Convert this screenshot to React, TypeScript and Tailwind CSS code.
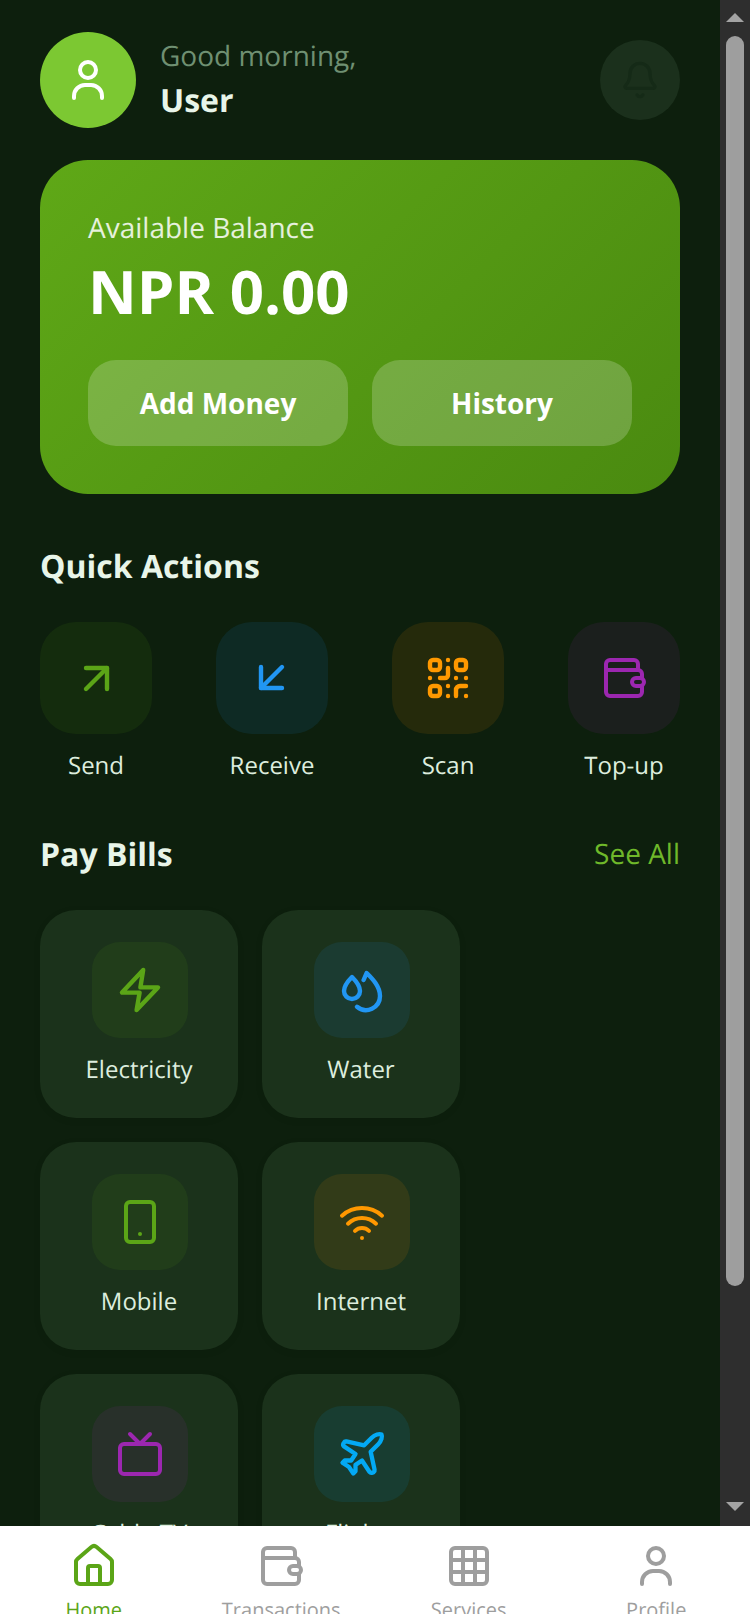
import type { ReactNode } from "react";

type IconProps = { className?: string; strokeWidth?: number };

function Icon({ className, strokeWidth = 2, children }: IconProps & { children: ReactNode }) {
  return (
    <svg viewBox="0 0 24 24" fill="none" stroke="currentColor" strokeWidth={strokeWidth} strokeLinecap="round" strokeLinejoin="round" className={className}>
      {children}
    </svg>
  );
}

const PersonIcon = (p: IconProps) => (
  <Icon {...p}>
    <circle cx="12" cy="7" r="4" />
    <path d="M5 21v-1a5.5 5.5 0 0 1 5.5-5.5h3A5.5 5.5 0 0 1 19 20v1" />
  </Icon>
);

const BellIcon = (p: IconProps) => (
  <Icon {...p}>
    <path d="M10.268 21a2 2 0 0 0 3.464 0" />
    <path d="M3.262 15.326A1 1 0 0 0 4 17h16a1 1 0 0 0 .74-1.673C19.41 13.956 18 12.499 18 8A6 6 0 0 0 6 8c0 4.499-1.411 5.956-2.738 7.326" />
  </Icon>
);

const SendIcon = (p: IconProps) => (
  <Icon {...p} strokeWidth={2.2}>
    <path d="M7 17.5 17.5 7" />
    <path d="M7 7h10.5v10.5" />
  </Icon>
);

const ReceiveIcon = (p: IconProps) => (
  <Icon {...p} strokeWidth={2.2}>
    <path d="M17 6.5 6.500 17" />
    <path d="M6.500 6.500V17H17" />
  </Icon>
);

const QrIcon = (p: IconProps) => (
  <Icon {...p} strokeWidth={2.2}>
    <rect x="3" y="3" width="5" height="5" rx="1.5" />
    <rect x="16" y="3" width="5" height="5" rx="1.5" />
    <rect x="3" y="16" width="5" height="5" rx="1.5" />
    <path d="M12 7v3.5a1.5 1.5 0 0 1-1.5 1.5H8" />
    <path d="M16 21v-3a2 2 0 0 1 2-2h3" />
    <path d="M12 3h.01M3 12h.01M16 12h.01M21 12h.01M12 16h.01M12 21h.01M21 21h.01" />
  </Icon>
);

const WalletIcon = (p: IconProps) => (
  <Icon {...p}>
    <path d="M19 8V5a2 2 0 0 0-2-2H5a2 2 0 0 0-2 2v14a2 2 0 0 0 2 2h14a2 2 0 0 0 2-2v-3" />
    <path d="M21 12v-2a2 2 0 0 0-2-2H3" />
    <rect x="16" y="12" width="6" height="4" rx="2" />
  </Icon>
);

const BoltIcon = (p: IconProps) => (
  <Icon {...p} strokeWidth={2.2}>
    <path d="M13.6 2 3 13.300h8.800L10.300 22 21 10.700h-8.800z" />
  </Icon>
);

const DropsIcon = (p: IconProps) => (
  <Icon {...p} strokeWidth={2.2}>
    <path d="M7 5.500C7 5.500 3 9.500 3 12.500a4 4 0 0 0 8 0C11 9.500 7 5.500 7 5.500z" />
    <path d="M12.800 7l1.500-3.500c2.500 2.500 6.700 6.500 6.700 11.500a7 7 0 0 1-11.500 5.400" />
  </Icon>
);

const MobileIcon = (p: IconProps) => (
  <Icon {...p}>
    <rect x="5" y="2" width="14" height="20" rx="2" />
    <path d="M12 18h.01" />
  </Icon>
);

const WifiIcon = (p: IconProps) => (
  <Icon {...p}>
    <path d="M12 20h.01" />
    <path d="M2 8.82a15 15 0 0 1 20 0" />
    <path d="M5 12.859a10 10 0 0 1 14 0" />
    <path d="M8.500 16.429a5 5 0 0 1 7 0" />
  </Icon>
);

const TvIcon = (p: IconProps) => (
  <Icon {...p}>
    <path d="m17 2-5 5-5-5" />
    <rect x="2" y="7" width="20" height="15" rx="2" />
  </Icon>
);

const PlaneIcon = (p: IconProps) => (
  <Icon {...p} className="h-[52px] w-[52px]">
    <path d="M17.8 19.2 16 11l3.500-3.500C21 6 21.500 4 21 3c-1-.5-3 0-4.500 1.500L13 8 4.800 6.200c-.5-.1-.9.1-1.100.5l-.3.5c-.2.5-.1 1 .3 1.300L9 12l-2 3H4l-1 1 3 2 2 3 1-1v-3l3-2 3.500 5.300c.3.4.8.5 1.300.3l.5-.2c.4-.3.6-.7.5-1.200z" />
  </Icon>
);

const HomeIcon = (p: IconProps) => (
  <Icon {...p}>
    <path d="M15 21v-8a1 1 0 0 0-1-1h-4a1 1 0 0 0-1 1v8" />
    <path d="M3 10a2 2 0 0 1 .709-1.528l7-6a2 2 0 0 1 2.582 0l7 6A2 2 0 0 1 21 10v9a2 2 0 0 1-2 2H5a2 2 0 0 1-2-2z" />
  </Icon>
);

const GridIcon = (p: IconProps) => (
  <Icon {...p}>
    <rect x="3" y="3" width="18" height="18" rx="2" />
    <path d="M3 9h18M3 15h18M9 3v18M15 3v18" />
  </Icon>
);

const quickActions = [
  { label: "Send", icon: SendIcon, box: "bg-[#5BA517]/10", color: "text-[#5BA517]" },
  { label: "Receive", icon: ReceiveIcon, box: "bg-[#2196F3]/10", color: "text-[#2196F3]" },
  { label: "Scan", icon: QrIcon, box: "bg-[#FF9800]/10", color: "text-[#FF9800]" },
  { label: "Top-up", icon: WalletIcon, box: "bg-[#9C27B0]/10", color: "text-[#9C27B0]" },
];

const bills = [
  { label: "Electricity", icon: BoltIcon, box: "bg-[#5BA517]/10", color: "text-[#5BA517]" },
  { label: "Water", icon: DropsIcon, box: "bg-[#2196F3]/10", color: "text-[#2196F3]" },
  { label: "Mobile", icon: MobileIcon, box: "bg-[#5BA517]/10", color: "text-[#5BA517]" },
  { label: "Internet", icon: WifiIcon, box: "bg-[#FF9800]/10", color: "text-[#FF9800]" },
  { label: "Cable TV", icon: TvIcon, box: "bg-[#9C27B0]/10", color: "text-[#9C27B0]" },
  { label: "Flights", icon: PlaneIcon, box: "bg-[#03A9F4]/10", color: "text-[#03A9F4]" },
];

const navItems = [
  { label: "Home", icon: HomeIcon, active: true },
  { label: "Transactions", icon: WalletIcon, active: false },
  { label: "Services", icon: GridIcon, active: false },
  { label: "Profile", icon: PersonIcon, active: false },
];

function Scrollbar() {
  return (
    <div className="flex w-[30px] shrink-0 flex-col items-center bg-[#2E2E2E]">
      <svg viewBox="0 0 18 9" className="mt-[13px] h-[9px] w-[18px] fill-[#A3A3A3]">
        <path d="M9 0 18 9H0z" />
      </svg>
      <div className="mt-[14px] h-[1250px] w-[18px] rounded-full bg-[#9E9E9E]" />
      <svg viewBox="0 0 18 9" className="mt-auto mb-[15px] h-[9px] w-[18px] fill-[#A3A3A3]">
        <path d="M0 0h18L9 9z" />
      </svg>
    </div>
  );
}

export default function App() {
  return (
    <div className="flex h-[1624px] w-[750px] flex-col overflow-hidden bg-white font-['Open_Sans',sans-serif] [text-rendering:geometricPrecision]">
      <div className="flex min-h-0 flex-1">
        <main className="min-w-0 flex-1 overflow-hidden bg-[#0D1F0D] px-10 pt-8">
          <header className="flex h-24 items-center">
            <div className="flex h-24 w-24 items-center justify-center rounded-full bg-[#7CC832] text-white">
              <PersonIcon className="h-12 w-12" />
            </div>
            <div className="ml-6 flex-1">
              <p className="text-[28px] leading-[38px] text-[#6F9072]">Good morning,</p>
              <p className="mt-1 text-[32px] leading-[44px] font-bold text-[#E8F5E9]">User</p>
            </div>
            <div className="flex h-20 w-20 items-center justify-center rounded-full bg-[#1B301C] text-[#152A17]">
              <BellIcon className="h-10 w-10" />
            </div>
          </header>

          <section className="mt-8 h-[334px] rounded-[48px] bg-linear-135 from-[#5FA817] to-[#4A8A10] px-12 pt-[49px]">
            <p className="text-[28px] leading-[38px] text-white/85">Available Balance</p>
            <p className="mt-[3px] text-[60px] leading-[82px] font-bold text-white">NPR 0.00</p>
            <div className="mt-7 flex gap-6">
              <button className="h-[86px] flex-1 rounded-[28px] bg-white/20 text-[28px] font-bold text-white">Add Money</button>
              <button className="h-[86px] flex-1 rounded-[28px] bg-white/20 text-[28px] font-bold text-white">History</button>
            </div>
          </section>

          <h2 className="mt-[51px] text-[32px] leading-[44px] font-bold text-[#E8F5E9]">Quick Actions</h2>
          <div className="mt-[33px] flex justify-between">
            {quickActions.map(({ label, icon: ActionIcon, box, color }) => (
              <div key={label} className="flex w-28 flex-col items-center">
                <div className={`flex h-28 w-28 items-center justify-center rounded-[36px] ${box} ${color}`}>
                  <ActionIcon className="h-12 w-12" />
                </div>
                <span className="mt-[15px] whitespace-nowrap text-[24px] leading-[33px] text-[#DDEDDE]">{label}</span>
              </div>
            ))}
          </div>

          <div className="mt-[51px] flex items-center justify-between">
            <h2 className="text-[32px] leading-[44px] font-bold text-[#E8F5E9]">Pay Bills</h2>
            <span className="mb-[2px] text-[28px] leading-[38px] text-[#6FB82A]">See All</span>
          </div>
          <div className="mt-[33px] flex flex-wrap gap-6">
            {bills.map(({ label, icon: BillIcon, box, color }) => (
              <div key={label} className="flex h-52 w-[198px] flex-col items-center rounded-[36px] bg-[#1B321B] pt-8 shadow-[0_2px_8px_rgba(0,0,0,0.06)]">
                <div className={`ml-[2px] flex h-24 w-24 items-center justify-center rounded-[28px] ${box} ${color}`}>
                  <BillIcon className="h-12 w-12" />
                </div>
                <span className="mt-[15px] text-[24px] leading-[33px] text-[#DDEDDE]">{label}</span>
              </div>
            ))}
          </div>
        </main>
        <Scrollbar />
      </div>

      <nav className="z-10 flex h-[98px] shrink-0 bg-white pt-4 pb-[10px]">
        {navItems.map(({ label, icon: NavIcon, active }) => (
          <div key={label} className={`flex flex-1 flex-col items-center overflow-hidden ${active ? "text-[#5BA517]" : "text-[#9E9E9E]"}`}>
            <NavIcon className="h-12 w-12 shrink-0" />
            <span className="mt-[6px] text-[20px] leading-[27px]">{label}</span>
          </div>
        ))}
      </nav>
    </div>
  );
}
